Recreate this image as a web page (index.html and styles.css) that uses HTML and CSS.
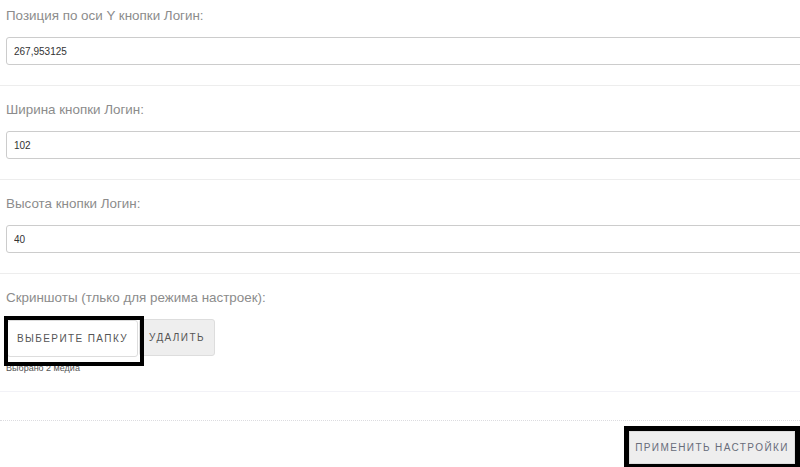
FILE: index.html
```html
<!DOCTYPE html>
<html>
<head>
    <title>Настройки</title>
    <link rel="stylesheet" href="styles.css">
</head>
<body>
    <div class="settings">
        <div class="field first">
            <label>Позиция по оси Y кнопки Логин:</label>
            <input type="text" value="267,953125">
        </div>

        <div class="field">
            <label>Ширина кнопки Логин:</label>
            <input type="text" value="102">
        </div>

        <div class="field">
            <label>Высота кнопки Логин:</label>
            <input type="text" value="40">
        </div>

        <div class="field media">
            <label>Скриншоты (тлько для режима настроек):</label>
            <div class="media-buttons">
                <div class="marked">
                    <button class="btn btn-white">Выберите папку</button>
                </div>
                <button class="btn btn-gray">Удалить</button>
            </div>
            <div class="media-count">Выбрано 2 медиа</div>
        </div>

        <div class="footer">
            <button class="btn btn-gray btn-apply">Применить настройки</button>
        </div>
    </div>
</body>
</html>
```

FILE: styles.css
```css
body {
    margin: 0;
    overflow: hidden;
    background: #fff;
    font-family: "Liberation Sans", Arial, sans-serif;
}

.settings {
    width: 800px;
}

.field {
    padding: 14px 0 20px 6px;
    border-bottom: 1px solid #ededed;
}

.field.first {
    margin-top: -8px;
}

.field label {
    display: block;
    height: 20px;
    line-height: 20px;
    font-size: 13.4px;
    color: #8c8c8c;
    margin-bottom: 11px;
}

.field input {
    display: block;
    box-sizing: border-box;
    width: 830px;
    height: 28px;
    padding: 0 7px;
    border: 1px solid #ccc;
    border-radius: 3px;
    font-family: "Liberation Sans", Arial, sans-serif;
    font-size: 10px;
    color: #333;
    outline: none;
}

.field.media {
    padding-bottom: 17px;
    border-bottom-color: #f2f2f7;
}

.media-buttons {
    display: flex;
    align-items: flex-start;
    gap: 1px;
}

.marked {
    position: relative;
    margin-left: 1px;
    margin-top: 1px;
}

.marked::after {
    content: "";
    position: absolute;
    left: -3px;
    top: -4px;
    width: 140px;
    height: 50px;
    box-sizing: border-box;
    border: 4px solid #000;
    z-index: 2;
}

.btn {
    display: block;
    box-sizing: border-box;
    height: 37px;
    padding: 0;
    border: 1px solid #ddd;
    border-radius: 3px;
    font-family: "Liberation Sans", Arial, sans-serif;
    font-size: 10px;
    letter-spacing: 1.4px;
    text-transform: uppercase;
    white-space: nowrap;
    text-align: center;
    color: #555;
    cursor: pointer;
}

.btn-white {
    width: 131px;
    background: #fff;
}

.btn-gray {
    width: 76px;
    background: #eee;
}

.media-count {
    margin-top: 6px;
    height: 11px;
    line-height: 11px;
    font-size: 9px;
    color: #555;
}

.footer {
    margin-top: 28px;
    padding: 10px 5px 10px 0;
    border-top: 1px dotted #dcdce0;
    display: flex;
    justify-content: flex-end;
}

.btn-apply {
    width: 166px;
    height: 33px;
    border-radius: 0;
    color: #676c7a;
    outline: 5px solid #000;
}
```
